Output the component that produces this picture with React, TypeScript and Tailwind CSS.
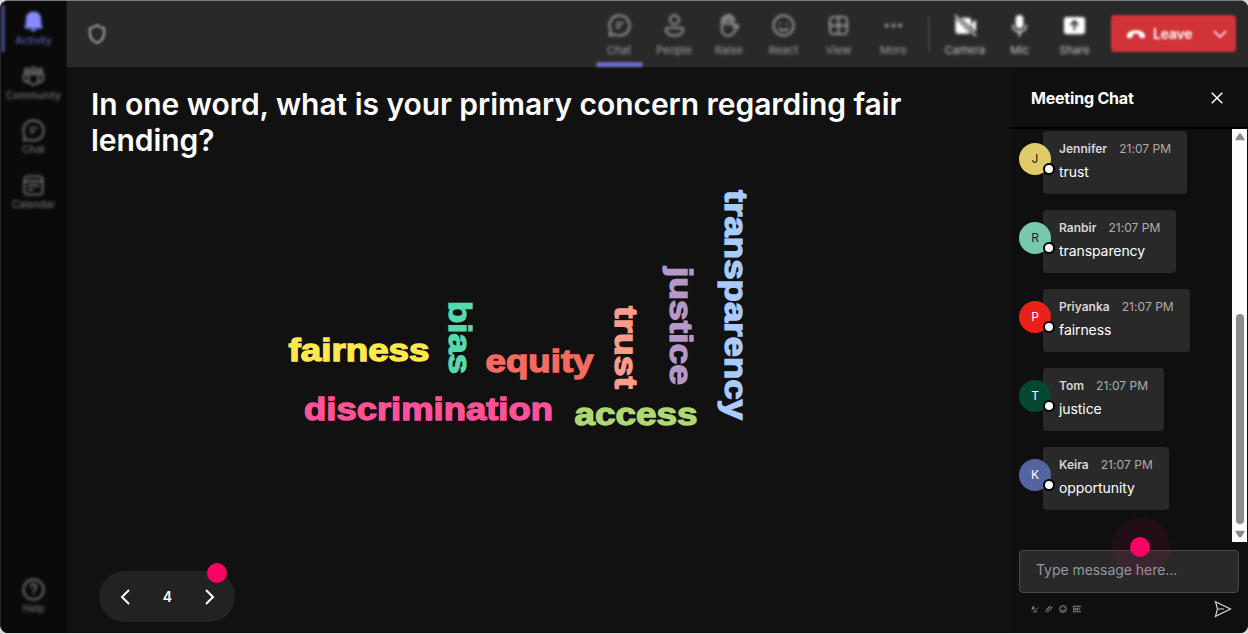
import type { ReactNode } from 'react';

interface IconProps {
    className?: string;
}

const stroke = {
    viewBox: '0 0 24 24',
    fill: 'none',
    stroke: 'currentColor',
    strokeWidth: 2,
    strokeLinecap: 'round' as const,
    strokeLinejoin: 'round' as const,
};

function BellIcon({ className }: IconProps) {
    return (
        <svg viewBox="0 0 24 24" fill="currentColor" className={className}>
            <path d="M12 1.5c-4.6 0-8 3.4-8 8v5L2.6 18c-.2.7.2 1.2.9 1.2h17c.7 0 1.1-.5.9-1.2L20 14.500v-5c0-4.600-3.400-8-8-8z" />
            <path d="M8.700 20.200a3.400 3 0 0 0 6.600 0z" />
        </svg>
    );
}

function CommunityIcon({ className }: IconProps) {
    return (
        <svg {...stroke} className={className}>
            <circle cx="12" cy="5" r="2.500" />
            <circle cx="5" cy="5.500" r="2" />
            <circle cx="19" cy="5.500" r="2" />
            <path d="M7 9.500h10v6a5 5 0 0 1-10 0zM7 9.500H1.800v4.500a4 4 0 0 0 4.500 4M17 9.500h5.200v4.500a4 4 0 0 1-4.500 4" />
        </svg>
    );
}

function ChatIcon({ className }: IconProps) {
    return (
        <svg {...stroke} className={className}>
            <path d="M12 1.500a10.500 10.500 0 1 1-5 19.700L1.600 22.400l1.200-5.200A10.500 10.500 0 0 1 12 1.500z" />
            <path d="M9 9.500h6.500M9 13.500h3.500" />
        </svg>
    );
}

function CalendarIcon({ className }: IconProps) {
    return (
        <svg {...stroke} className={className}>
            <rect x="2.500" y="2.500" width="19" height="19" rx="3.500" />
            <path d="M3 7.500h18M7 12h10M7 16.500h4" />
        </svg>
    );
}

function HelpIcon({ className }: IconProps) {
    return (
        <svg {...stroke} className={className}>
            <circle cx="12" cy="12" r="10.500" />
            <path d="M9 9.500a3 3 0 1 1 4.500 2.600c-1 .6-1.500 1.100-1.500 2.100M12 17.200v.1" />
        </svg>
    );
}

function ShieldIcon({ className }: IconProps) {
    return (
        <svg {...stroke} strokeWidth={3} className={className}>
            <path d="M12 2.500c2.500 2 4.500 2.800 7.700 3v6c0 5-3.200 8.300-7.700 10.300-4.500-2-7.700-5.300-7.700-10.300v-6c3.200-.2 5.200-1 7.700-3z" />
        </svg>
    );
}

function PeopleIcon({ className }: IconProps) {
    return (
        <svg {...stroke} className={className}>
            <circle cx="12" cy="6" r="4.700" />
            <path d="M5 14.500h14a2 2 0 0 1 2 2c0 4-4 6-9 6s-9-2-9-6a2 2 0 0 1 2-2z" />
        </svg>
    );
}

function RaiseIcon({ className }: IconProps) {
    return (
        <svg {...stroke} className={className}>
            <path d="M5 12V6a1.500 1.500 0 0 1 3 0V3.500a1.500 1.500 0 0 1 3.200 0V2.500a1.500 1.500 0 0 1 3.200 0v2a1.500 1.500 0 0 1 3 0V14l3-2.200c1.500-.8 2.400.6 1.500 1.800L17 20c-1.500 2-3.500 2.700-5.800 2.700C7 22.700 5 19 5 15z" />
            <path d="M8 5v6M11.200 3v8M14.400 4v7" />
        </svg>
    );
}

function ReactIcon({ className }: IconProps) {
    return (
        <svg {...stroke} className={className}>
            <circle cx="12" cy="12" r="10.500" />
            <path d="M8.500 9.500v.3M15.500 9.500v.3M7.500 15c2.500 3 6.500 3 9 0" />
        </svg>
    );
}

function ViewIcon({ className }: IconProps) {
    return (
        <svg {...stroke} className={className}>
            <rect x="3" y="3" width="18" height="18" rx="4" />
            <path d="M12 3v18M3 12h18" />
        </svg>
    );
}

function MoreIcon({ className }: IconProps) {
    return (
        <svg viewBox="0 0 24 24" fill="currentColor" className={className}>
            <circle cx="5" cy="12" r="2.100" />
            <circle cx="12" cy="12" r="2.100" />
            <circle cx="19" cy="12" r="2.100" />
        </svg>
    );
}

function CameraOffIcon({ className }: IconProps) {
    return (
        <svg viewBox="0 0 24 24" fill="currentColor" className={className}>
            <path d="M1.500 4.500 17 20a3 3 0 0 1-1.500.5h-11a3 3 0 0 1-3-3zM7 4h8a3 3 0 0 1 3 3v7.500zM19 9l4-3v12.500l-4-3.500z" />
            <path d="m1 1 22 22" stroke="currentColor" strokeWidth="1.600" />
        </svg>
    );
}

function MicIcon({ className }: IconProps) {
    return (
        <svg {...stroke} className={className}>
            <rect x="8" y="1" width="8" height="14" rx="4" fill="currentColor" stroke="none" />
            <path d="M5 12c0 8.500 14 8.500 14 0M12 18.500V23" strokeWidth="1.700" />
        </svg>
    );
}

function ShareIcon({ className }: IconProps) {
    return (
        <svg viewBox="0 0 24 24" className={className}>
            <rect x="1" y="3" width="22" height="18" rx="3" fill="currentColor" />
            <path d="M12 17V8M8 11.500 12 7.500l4 4" fill="none" stroke="#292929" strokeWidth="2" />
        </svg>
    );
}

function SideItem({ label, children, active }: { label: string; children: ReactNode; active?: boolean }) {
    return (
        <div className={`flex h-[54.500px] w-full flex-col items-center blur-[1.400px] ${active ? 'text-[#858bff]' : 'text-[#707070]'}`}>
            {children}
            <span className={`text-[10px] leading-[14px] font-medium ${active ? 'text-[#5b5eb8]' : ''}`}>{label}</span>
        </div>
    );
}

function ToolItem({ label, children, bright }: { label: string; children: ReactNode; bright?: boolean }) {
    return (
        <div className={`flex w-[54.800px] flex-col items-center pt-[13px] blur-[1.400px] ${bright ? 'text-white' : 'text-[#9c9c9c]'}`}>
            {children}
            <span className={`mt-1.5 text-[11px] leading-[14px] ${bright ? 'text-[#c4c4c4]' : 'text-[#a0a0a0]'}`}>{label}</span>
        </div>
    );
}

const words = [
    { text: 'fairness', color: '#ffe94f', x: 288.5, y: 361, length: 141 },
    { text: 'discrimination', color: '#ff5298', x: 304, y: 420, length: 249 },
    { text: 'equity', color: '#f56b5f', x: 485.5, y: 372, length: 108 },
    { text: 'access', color: '#afd875', x: 574.5, y: 425, length: 123 },
    { text: 'bias', color: '#55dbab', x: 448.5, y: 301, length: 73, vertical: true },
    { text: 'trust', color: '#ff9b89', x: 614.5, y: 306, length: 83, vertical: true },
    { text: 'justice', color: '#b698c6', x: 669.5, y: 267, length: 118, vertical: true },
    { text: 'transparency', color: '#a9cbff', x: 724.5, y: 190, length: 230, vertical: true },
];

function WordCloud() {
    return (
        <svg viewBox="280 180 480 256" className="mt-[22px] ml-[189px] h-[256px] w-[480px]">
            {words.map((word) => (
                <text
                    key={word.text}
                    transform={`translate(${word.x} ${word.y})${word.vertical ? ' rotate(90)' : ''}`}
                    textLength={word.length}
                    lengthAdjust="spacingAndGlyphs"
                    fill={word.color}
                    stroke={word.color}
                    strokeWidth="1.300"
                    className="font-['Arial_Black','Liberation_Sans',sans-serif] text-[31.500px] font-black"
                >
                    {word.text}
                </text>
            ))}
        </svg>
    );
}

const messages = [
    { name: 'Jennifer', text: 'trust', avatar: 'bg-[#dfcb68] text-[#222]' },
    { name: 'Ranbir', text: 'transparency', avatar: 'bg-[#78c8ae] text-[#222]' },
    { name: 'Priyanka', text: 'fairness', avatar: 'bg-[#ea2119] text-white' },
    { name: 'Tom', text: 'justice', avatar: 'bg-[#064732] text-white' },
    { name: 'Keira', text: 'opportunity', avatar: 'bg-[#5265a0] text-white' },
];

function Message({ name, text, avatar }: { name: string; text: string; avatar: string }) {
    return (
        <div className="flex items-start">
            <div className={`relative z-10 mt-3 -mr-2 flex size-8 shrink-0 items-center justify-center rounded-full text-xs ${avatar}`}>
                {name[0]}
                <span className="absolute top-5 left-6 size-3 rounded-full border-2 border-black bg-white" />
            </div>
            <div className="h-[63px] rounded bg-[#292929] px-4 pt-2.5">
                <div className="flex gap-3 text-xs leading-4">
                    <span className="font-semibold text-[#d6d6d6]">{name}</span>
                    <span className="tracking-[0.050px] text-[#adadad]">21:07 PM</span>
                </div>
                <div className="mt-[5px] text-sm leading-5 tracking-[-0.080px] text-white">{text}</div>
            </div>
        </div>
    );
}

function ChatPanel() {
    return (
        <aside className="flex w-[237px] shrink-0 flex-col bg-[#0f0f0f]">
            <div className="flex h-[62px] items-center justify-between border-b-2 border-black pr-[25px] pt-px pl-5">
                <h2 className="text-base font-bold tracking-[-0.200px] text-white">Meeting Chat</h2>
                <svg viewBox="0 0 12 12" className="size-3 text-white" fill="none" stroke="currentColor" strokeWidth="1.500">
                    <path d="m.7.7 10.600 10.600M11.300.7.7 11.300" />
                </svg>
            </div>
            <div className="flex h-[413px] justify-between pr-px pl-2">
                <div className="flex flex-col gap-4 pt-[2px]">
                    {messages.map((message) => (
                        <Message key={message.name} {...message} />
                    ))}
                </div>
                <div className="flex w-[15px] flex-col items-center bg-[#fcfcfc]">
                    <svg viewBox="0 0 10 8" className="mt-1 h-2 w-2.5" fill="#8b8b8b">
                        <path d="M4.200.5h1.600L9.500 6q.5 1.300-.7 1.300H1.200Q0 7.300.5 6z" />
                    </svg>
                    <div className="mt-[173px] h-[210px] w-2 rounded-full bg-[#8b8b8b]" />
                    <svg viewBox="0 0 10 8" className="mt-1.5 h-2 w-2.5 rotate-180" fill="#8b8b8b">
                        <path d="M4.200.5h1.600L9.500 6q.5 1.300-.7 1.300H1.200Q0 7.300.5 6z" />
                    </svg>
                </div>
            </div>
            <div className="relative mt-2 mr-[9px] ml-2 flex h-[43px] shrink-0 items-center rounded border border-[#484848] bg-[#292929] pb-1 pl-4">
                <span className="text-sm tracking-[-0.050px] text-[#8f99a5]">Type message here...</span>
                <span className="absolute -top-[33px] left-[92px] size-[58px] rounded-full bg-[#ff0066]/8" />
                <span className="absolute -top-[14px] left-[110px] size-5 rounded-full bg-[#ff0066]" />
            </div>
            <div className="flex items-center pt-[7px] pr-4 pl-5 text-[#8a8a8a]">
                <div className="flex gap-1.5">
                    <svg viewBox="0 0 10 10" className="size-2" fill="none" stroke="currentColor" strokeWidth="1.200">
                        <path d="m1 6.500 2-5 1 4M1 4h3M3 9l6-6M4 9c2-2 2 1 4-1" />
                    </svg>
                    <svg viewBox="0 0 10 10" className="size-2" fill="none" stroke="currentColor" strokeWidth="1.200">
                        <path d="m3 6 4-3.500c1.500-1 2.500.5 1.500 1.500L4 8C2 9.500 0 7.500 2 5.500l4-4" />
                    </svg>
                    <svg viewBox="0 0 10 10" className="size-2" fill="none" stroke="currentColor" strokeWidth="1.200">
                        <circle cx="5" cy="5" r="4.300" />
                        <path d="M3 3.500h1M6 3.500h1M2.500 6c1.500 2 3.500 2 5 0" />
                    </svg>
                    <svg viewBox="0 0 10 10" className="size-2" fill="none" stroke="currentColor" strokeWidth="1.200">
                        <path d="M10 1.500H.5v7H10M2.500 7V3.500L4 6l1.500-2.500V7M7 4h2M7 6h2" />
                    </svg>
                </div>
                <svg viewBox="0 0 18 18" className="ml-auto size-[18px] text-[#d6d6d6]" fill="none" stroke="currentColor" strokeWidth="1.200">
                    <path d="m1.500 1.700 15 7.300-15 7.300L3.500 9zM3.500 9H10" />
                </svg>
            </div>
        </aside>
    );
}

export default function App() {
    return (
        <div className="h-[634px] w-[1248px] bg-[#d8dddb] font-['Inter',sans-serif]">
            <div className="flex h-[633px] overflow-hidden rounded-lg border-t border-l border-t-[#777b79] border-l-[#292929] bg-[#111]">
                <nav className="flex w-[66px] shrink-0 flex-col bg-[#0a0a0a]">
                    <div className="relative pt-[9px] pr-px">
                        <span className="absolute top-1 left-0 h-[47px] w-1 bg-[#3f4180] blur-[1px]" />
                        <SideItem label="Activity" active><BellIcon className="size-[23px]" /></SideItem>
                        <SideItem label="Community"><CommunityIcon className="size-[23px]" /></SideItem>
                        <SideItem label="Chat"><ChatIcon className="size-[23px]" /></SideItem>
                        <SideItem label="Calendar"><CalendarIcon className="size-[23px]" /></SideItem>
                    </div>
                    <div className="mt-auto pr-px pb-px">
                        <SideItem label="Help"><HelpIcon className="size-[23px]" /></SideItem>
                    </div>
                </nav>
                <div className="flex min-w-0 flex-1 flex-col">
                    <header className="flex h-[66px] shrink-0 bg-[#292929] pr-3 pl-[19px] shadow-[0_0_2px_#292929]">
                        <ShieldIcon className="mt-[22px] size-[22px] text-[#858585] blur-[1.200px]" />
                        <div className="ml-auto flex">
                            <div className="relative">
                                <ToolItem label="Chat"><ChatIcon className="size-[23px]" /></ToolItem>
                                <span className="absolute bottom-0 left-1 h-[5px] w-[47px] rounded-sm bg-[#686bc4] blur-[1px]" />
                            </div>
                            <ToolItem label="People"><PeopleIcon className="size-[23px]" /></ToolItem>
                            <ToolItem label="Raise"><RaiseIcon className="size-[23px]" /></ToolItem>
                            <ToolItem label="React"><ReactIcon className="size-[23px]" /></ToolItem>
                            <ToolItem label="View"><ViewIcon className="size-[23px]" /></ToolItem>
                            <ToolItem label="More"><MoreIcon className="size-[23px]" /></ToolItem>
                        </div>
                        <div className="mt-[15px] mr-2 ml-[7px] h-[36px] w-0.5 bg-[#404040] blur-[0.800px]" />
                        <div className="flex">
                            <ToolItem label="Camera" bright><CameraOffIcon className="size-[23px]" /></ToolItem>
                            <ToolItem label="Mic" bright><MicIcon className="size-[23px]" /></ToolItem>
                            <ToolItem label="Share" bright><ShareIcon className="size-[23px]" /></ToolItem>
                        </div>
                        <div className="mt-[14px] ml-[9px] flex h-[37px] w-[125px] items-center rounded bg-[#d13438] pl-[15px] text-white blur-[1.200px]">
                            <svg viewBox="0 0 20 12" className="h-3 w-5" fill="currentColor">
                                <path d="M1 7C2.500.5 17.500.5 19 7c.4 2-.5 3.500-2 3.200l-2.700-.6c-1.700-.5-1-2.400-1.600-3.500-1.500-.8-4-.8-5.500 0-.5 1.100 0 3-1.500 3.500L3 10.200C1.500 10.500.6 9 1 7z" />
                            </svg>
                            <span className="ml-[7px] text-sm font-semibold tracking-[-0.200px]">Leave</span>
                            <svg viewBox="0 0 14 8" className="mr-[9px] ml-auto h-2 w-3.5" fill="none" stroke="currentColor" strokeWidth="1.500">
                                <path d="m1 1 6 6 6-6" />
                            </svg>
                        </div>
                    </header>
                    <div className="flex min-h-0 flex-1">
                        <main className="flex min-w-0 flex-1 flex-col pt-[19px] pl-6">
                            <h1 className="w-[860px] text-[30px] leading-9 font-semibold tracking-[-0.050px] text-white">
                                In one word, what is your primary concern regarding fair lending?
                            </h1>
                            <WordCloud />
                            <div className="relative mt-auto mb-[11px] ml-2 flex h-[51px] w-[136px] items-center justify-between rounded-full bg-[#222] px-[21px] text-white">
                                <svg viewBox="0 0 10 16" className="h-4 w-2.5" fill="none" stroke="currentColor" strokeWidth="2">
                                    <path d="M9 1 2 8l7 7" />
                                </svg>
                                <span className="text-sm font-semibold">4</span>
                                <svg viewBox="0 0 10 16" className="-mr-px h-4 w-2.5" fill="none" stroke="currentColor" strokeWidth="2">
                                    <path d="m1 1 7 7-7 7" />
                                </svg>
                                <span className="absolute -top-2 left-[108px] size-5 rounded-full bg-[#ff0066]" />
                            </div>
                        </main>
                        <ChatPanel />
                    </div>
                </div>
            </div>
        </div>
    );
}
